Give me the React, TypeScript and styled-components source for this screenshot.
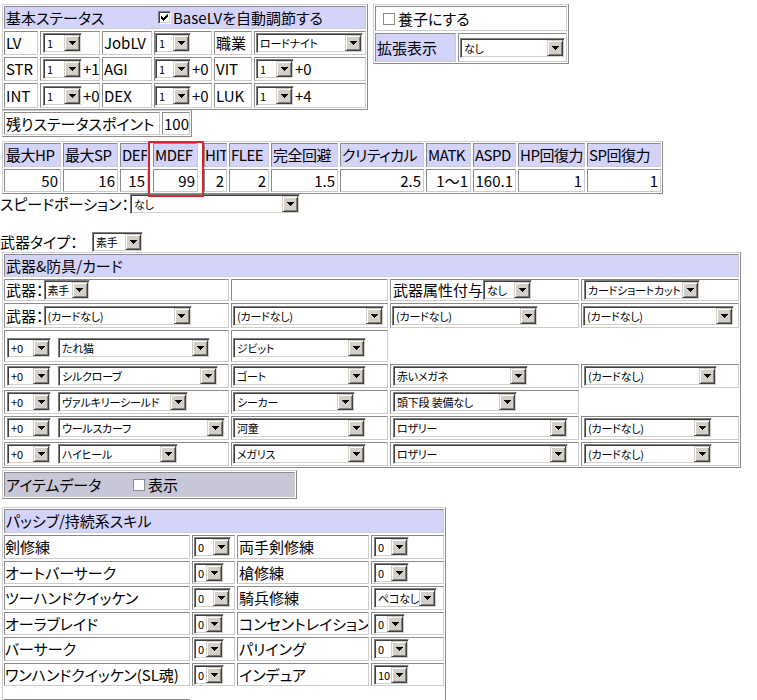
import React, { ReactNode } from "react";
import styled, { createGlobalStyle } from "styled-components";

const LAVENDER = "#d4d4fb";

const GlobalStyle = createGlobalStyle`
  html, body { margin: 0; padding: 0; background: #ffffff; }
  body {
    font-family: "Noto Sans CJK JP", "Liberation Sans", sans-serif;
    font-size: 15px;
    line-height: 20px;
    color: #000000;
    font-feature-settings: "palt";
  }
  * { box-sizing: border-box; }
`;

const Page = styled.div`
  width: 757px;
  padding-top: 4px;
`;

const TopRow = styled.div`
  display: flex;
  align-items: flex-start;
  gap: 3px;
`;

const Column = styled.div`
  display: flex;
  flex-direction: column;
  align-items: flex-start;
`;

// a bordered "table": grid with cellspacing-like gaps
const Board = styled.div<{ $cols: string; $rows: string; $mt?: number }>`
  position: relative;
  display: grid;
  grid-template-columns: ${(p) => p.$cols};
  grid-template-rows: ${(p) => p.$rows};
  gap: 2px;
  padding: 1px;
  margin: ${(p) => p.$mt ?? 0}px 0 0 2px;
  width: max-content;
  border: 1px solid;
  border-color: #d0d0d0 #8a8a8a #8a8a8a #d0d0d0;
  background: #ffffff;
`;

const Cell = styled.div<{
  $span?: number;
  $bg?: string;
  $right?: boolean;
  $pad?: string;
  $gap?: number;
  $end?: boolean;
  $inset?: string;
  $tight?: boolean;
}>`
  grid-column: span ${(p) => p.$span ?? 1};
  display: flex;
  align-items: ${(p) => (p.$end ? "flex-end" : "center")};
  justify-content: ${(p) => (p.$right ? "flex-end" : "flex-start")};
  gap: ${(p) => p.$gap ?? 0}px;
  padding: ${(p) => p.$pad ?? "0 1px"};
  margin: ${(p) => p.$inset ?? "0"};
  background: ${(p) => p.$bg ?? "#ffffff"};
  border: 1px solid;
  border-color: #8a8a8a #cccccc #cccccc #8a8a8a;
  letter-spacing: ${(p) => (p.$tight ? "-0.5px" : "normal")};
  white-space: nowrap;
  overflow: hidden;
`;

const Empty = styled.div<{ $span?: number }>`
  grid-column: span ${(p) => p.$span ?? 1};
`;

const Title = styled.span<{ $w?: number }>`
  display: inline-block;
  width: ${(p) => (p.$w ? `${p.$w}px` : "auto")};
  flex: none;
  white-space: nowrap;
`;

const SelectBox = styled.span<{ $w: number }>`
  display: inline-flex;
  align-items: center;
  flex: none;
  width: ${(p) => p.$w}px;
  height: 20px;
  padding: 1px;
  border: 1px solid;
  border-color: #808080 #ffffff #ffffff #808080;
  box-shadow: inset 1px 1px 0 #404040, inset -1px -1px 0 #d4d0c8;
  background: #ffffff;
  letter-spacing: normal;
`;

const SelectText = styled.span`
  flex: 1;
  min-width: 0;
  overflow: hidden;
  padding-left: 2px;
  font-size: 11px;
  letter-spacing: -0.2px;
  line-height: 16px;
  white-space: nowrap;
`;

const DropButton = styled.span`
  flex: none;
  display: flex;
  align-items: center;
  justify-content: center;
  width: 16px;
  height: 16px;
  background: #d4d0c8;
  border: 1px solid;
  border-color: #d4d0c8 #404040 #404040 #d4d0c8;
  box-shadow: inset 1px 1px 0 #ffffff, inset -1px -1px 0 #808080;
`;

const CheckBox = styled.span<{ $flat?: boolean }>`
  display: inline-flex;
  align-items: center;
  justify-content: center;
  flex: none;
  width: ${(p) => (p.$flat ? 12 : 13)}px;
  height: ${(p) => (p.$flat ? 12 : 13)}px;
  background: #ffffff;
  border: 1px solid;
  border-color: ${(p) => (p.$flat ? "#8a8a8a" : "#808080 #ffffff #ffffff #808080")};
  box-shadow: ${(p) => (p.$flat ? "none" : "inset 1px 1px 0 #404040, inset -1px -1px 0 #d4d0c8")};
`;

const InlineRow = styled.div`
  display: flex;
  align-items: center;
  height: 20px;
`;

const Spacer = styled.div<{ $h: number }>`
  height: ${(p) => p.$h}px;
`;

const Highlight = styled.div`
  position: absolute;
  left: 145px;
  top: -1px;
  width: 56px;
  height: 56px;
  border: 2px solid #d9232e;
  pointer-events: none;
`;

const Select: React.FC<{ w: number; children?: ReactNode }> = ({ w, children }) => (
  <SelectBox $w={w}>
    <SelectText>{children}</SelectText>
    <DropButton>
      <svg width="7" height="4" viewBox="0 0 7 4" shapeRendering="crispEdges">
        <rect x="0" y="0" width="7" height="1" fill="#000" />
        <rect x="1" y="1" width="5" height="1" fill="#000" />
        <rect x="2" y="2" width="3" height="1" fill="#000" />
        <rect x="3" y="3" width="1" height="1" fill="#000" />
      </svg>
    </DropButton>
  </SelectBox>
);

const Check: React.FC<{ on?: boolean; flat?: boolean }> = ({ on, flat }) => (
  <CheckBox $flat={flat}>
    {on && (
      <svg width="7" height="7" viewBox="0 0 7 7" shapeRendering="crispEdges">
        <path d="M0 2h1v1h1v1h1v-1h1v-1h1v-1h1v-1h1v3h-1v1h-1v1h-1v1h-1v1h-1v-1h-1v-1h-1v-1h-1z" fill="#000" />
      </svg>
    )}
  </CheckBox>
);

const statLabels = ["最大HP", "最大SP", "DEF", "MDEF", "HIT", "FLEE", "完全回避", "クリティカル", "MATK", "ASPD", "HP回復力", "SP回復力"];
const statValues = ["50", "16", "15", "99", "2", "2", "1.5", "2.5", "1～1", "160.1", "1", "1"];

const baseRows = [
  { a: "STR", av: "+1", b: "AGI", bv: "+0", c: "VIT", cv: "+0" },
  { a: "INT", av: "+0", b: "DEX", bv: "+0", c: "LUK", cv: "+4" },
];

type Gear = { refine: string; name: string; nameW: number; card: string; cardW: number; c3?: [string, number]; c4?: [string, number] };

const gear: Gear[] = [
  { refine: "+0", name: "シルクローブ", nameW: 160, card: "ゴート", cardW: 133, c3: ["赤いメガネ", 135], c4: ["(カードなし)", 133] },
  { refine: "+0", name: "ヴァルキリーシールド", nameW: 130, card: "シーカー", cardW: 122, c3: ["頭下段 装備なし", 124] },
  { refine: "+0", name: "ウールスカーフ", nameW: 167, card: "河童", cardW: 133, c3: ["ロザリー", 175], c4: ["(カードなし)", 128] },
  { refine: "+0", name: "ハイヒール", nameW: 120, card: "メガリス", cardW: 133, c3: ["ロザリー", 175], c4: ["(カードなし)", 128] },
];

const skills: [string, number, string, string, number, string][] = [
  ["剣修練", 37, "0", "両手剣修練", 35, "0"],
  ["オートバーサーク", 30, "0", "槍修練", 35, "0"],
  ["ツーハンドクイッケン", 37, "0", "騎兵修練", 63, "ペコなし"],
  ["オーラブレイド", 30, "0", "コンセントレイション", 31, "0"],
  ["バーサーク", 30, "0", "パリイング", 35, "0"],
  ["ワンハンドクイッケン(SL魂)", 30, "0", "インデュア", 35, "10"],
];

const App: React.FC = () => {
  return (
    <Page>
      <GlobalStyle />
      <TopRow>
        <Column>
          <Board $cols="34px 60px 50px 58px 38px 112px" $rows="23px 24px 24px 25px">
            <Cell $span={6} $bg={LAVENDER} $gap={2}>
              <Title $w={150}>基本ステータス</Title>
              <Check on />
              <span>BaseLVを自動調節する</span>
            </Cell>
            <Cell>LV</Cell>
            <Cell $pad="0 0 0 2px"><Select w={39}>1</Select></Cell>
            <Cell>JobLV</Cell>
            <Cell $pad="0"><Select w={36}>1</Select></Cell>
            <Cell>職業</Cell>
            <Cell $pad="0 0 0 1px"><Select w={107}>ロードナイト</Select></Cell>
            {baseRows.map((r) => (
              <React.Fragment key={r.a}>
                <Cell>{r.a}</Cell>
                <Cell $pad="0 0 0 2px" $gap={1}><Select w={39}>1</Select>{r.av}</Cell>
                <Cell>{r.b}</Cell>
                <Cell $pad="0" $gap={1}><Select w={36}>1</Select>{r.bv}</Cell>
                <Cell>{r.c}</Cell>
                <Cell $pad="0 0 0 1px" $gap={1}><Select w={38}>1</Select>{r.cv}</Cell>
              </React.Fragment>
            ))}
          </Board>
          <Board $cols="156px 28px" $rows="23px">
            <Cell>残りステータスポイント</Cell>
            <Cell>100</Cell>
          </Board>
        </Column>
        <Board $cols="81px 109px" $rows="25px 29px">
          <Cell $span={2} $pad="0 0 0 7px" $gap={3}>
            <Check flat />
            <span>養子にする</span>
          </Cell>
          <Cell $bg={LAVENDER}>拡張表示</Cell>
          <Cell $pad="0 0 0 1px"><Select w={105}>なし</Select></Cell>
        </Board>
      </TopRow>

      <Board $mt={4} $cols="57px 55px 28px 52px 23px 40px 67px 84px 45px 43px 67px 74px" $rows="24px 23px">
        {statLabels.map((l) => (
          <Cell key={l} $bg={LAVENDER} $pad={l === "HIT" ? "0" : "0 0 0 1px"} $tight $inset={l === "MDEF" ? "0 4px 0 3px" : "0"}>{l}</Cell>
        ))}
        {statValues.map((v, i) => (
          <Cell key={i} $right $pad="0 2px 0 0" $inset={i === 3 ? "0 4px 0 3px" : "0"}>{v}</Cell>
        ))}
        <Highlight />
      </Board>

      <InlineRow>
        <Title $w={130}>スピードポーション：</Title>
        <Select w={170}>なし</Select>
      </InlineRow>
      <Spacer $h={18} />
      <InlineRow>
        <Title $w={92}>武器タイプ：</Title>
        <Select w={51}>素手</Select>
      </InlineRow>

      <Board $cols="225px 157px 189px 158px" $rows="23px 22px 25px 32px 24px 24px 24px 24px">
        <Cell $span={4} $bg={LAVENDER}>武器&amp;防具/カード</Cell>

        <Cell>武器：<Select w={46}>素手</Select></Cell>
        <Cell />
        <Cell $pad="0 0 0 2px">武器属性付与<Select w={49}>なし</Select></Cell>
        <Cell $pad="0 0 0 2px"><Select w={116}>カードショートカット</Select></Cell>

        <Cell>武器：<Select w={148}>(カードなし)</Select></Cell>
        <Cell><Select w={151}>(カードなし)</Select></Cell>
        <Cell><Select w={146}>(カードなし)</Select></Cell>
        <Cell><Select w={151}>(カードなし)</Select></Cell>

        <Cell $end $pad="0 0 3px 2px" $gap={7}>
          <Select w={44}>+0</Select>
          <Select w={152}>たれ猫</Select>
        </Cell>
        <Cell $end $pad="0 0 3px 1px"><Select w={133}>ジビット</Select></Cell>
        <Empty $span={2} />

        {gear.map((g) => (
          <React.Fragment key={g.name}>
            <Cell $pad="0 0 0 2px" $gap={7}>
              <Select w={44}>{g.refine}</Select>
              <Select w={g.nameW}>{g.name}</Select>
            </Cell>
            <Cell $pad="0 0 0 1px"><Select w={g.cardW}>{g.card}</Select></Cell>
            {g.c3 ? <Cell $pad="0 0 0 2px"><Select w={g.c3[1]}>{g.c3[0]}</Select></Cell> : <Empty />}
            {g.c4 ? <Cell $pad="0 0 0 2px"><Select w={g.c4[1]}>{g.c4[0]}</Select></Cell> : <Empty />}
          </React.Fragment>
        ))}
      </Board>

      <Board $mt={2} $cols="291px" $rows="25px">
        <Cell $bg="#c7c7d7" $gap={3}>
          <Title $w={124}>アイテムデータ</Title>
          <Check flat />
          <span>表示</span>
        </Cell>
      </Board>

      <Board $mt={8} $cols="186px 43px 132px 73px" $rows="24px 24px 23px 24px 23px 24px 23px 9px 20px">
        <Cell $span={4} $bg={LAVENDER}>パッシブ/持続系スキル</Cell>
        {skills.map((s) => (
          <React.Fragment key={s[0]}>
            <Cell $pad="0">{s[0]}</Cell>
            <Cell $pad="0 0 0 1px"><Select w={s[1]}>{s[2]}</Select></Cell>
            <Cell>{s[3]}</Cell>
            <Cell $pad="0 0 0 2px"><Select w={s[4]}>{s[5]}</Select></Cell>
          </React.Fragment>
        ))}
        <Empty $span={4} />
        <Cell />
        <Empty $span={3} />
      </Board>
    </Page>
  );
};

export default App;
